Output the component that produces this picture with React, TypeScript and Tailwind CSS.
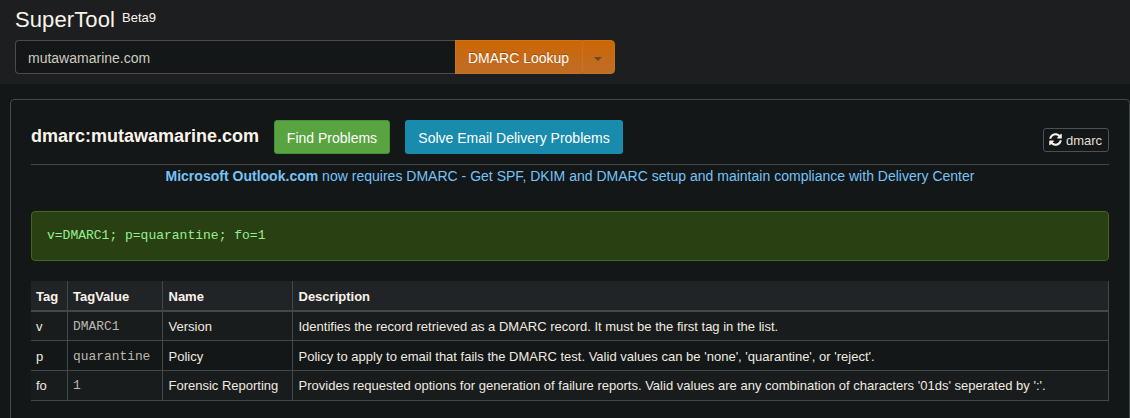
import { FaSyncAlt } from "react-icons/fa";

const rows = [
  { tag: "v", value: "DMARC1", name: "Version", description: "Identifies the record retrieved as a DMARC record. It must be the first tag in the list.", size: "h-[29px] leading-[29px]" },
  { tag: "p", value: "quarantine", name: "Policy", description: "Policy to apply to email that fails the DMARC test. Valid values can be 'none', 'quarantine', or 'reject'.", size: "h-[30px] leading-[31px]" },
  { tag: "fo", value: "1", name: "Forensic Reporting", description: "Provides requested options for generation of failure reports. Valid values are any combination of characters '01ds' seperated by ':'.", size: "h-[30px] leading-[29px]" },
];

const columns = "grid grid-cols-[37px_95px_130px_816px]";
const cell = "border-r border-[#43484b] px-[5px] whitespace-nowrap";
const wideCell = "border-r border-[#43484b] pl-[5.5px] whitespace-nowrap";

function SearchHeader() {
  return (
    <header className="h-[84px] bg-[#1d1e20] px-[15px] pt-[5px]">
      <h1 className="flex h-[35px] items-start text-[22px] leading-[29px] text-[#faf3ea]">
        <span className="w-[107px] tracking-[0.1px]">SuperTool</span>
        <sup className="top-0 text-[13px] leading-[25px]">Beta9</sup>
      </h1>
      <div className="flex h-[34px] w-[600px] text-[14px]">
        <div className="flex w-[440px] items-center rounded-l border border-r-0 border-[#484c4e] bg-[#131718] px-3 pt-[2px] text-[#cfcabf]">
          mutawamarine.com
        </div>
        <button className="flex w-[127px] items-center border border-r-0 border-[#c47422] bg-linear-to-b from-[#cc6600] to-[#bf6d24] pt-[3px] pl-3 text-white [text-shadow:0_-1px_0_rgba(0,0,0,0.25)]">
          DMARC Lookup
        </button>
        <button aria-label="Choose lookup" className="flex flex-1 items-center rounded-r border border-[#c47422] bg-linear-to-b from-[#cc6600] to-[#bf6d24] pt-[3px] pl-[11px]">
          <span className="border-x-4 border-t-4 border-x-transparent border-t-[#65482f]" />
        </button>
      </div>
    </header>
  );
}

function TagTable() {
  return (
    <div className="mt-5 text-[13px] text-[#f0eae0]">
      <div className={`${columns} h-[31px] border-b-2 border-[#43484b] bg-[#212426] leading-[31px] font-bold text-[#faf3ea]`}>
        <div className={cell}>Tag</div>
        <div className={cell}>TagValue</div>
        <div className={wideCell}>Name</div>
        <div className={wideCell}>Description</div>
      </div>
      {rows.map((row) => (
        <div key={row.tag} className={`${columns} ${row.size} border-b border-[#43484b] odd:bg-[#131718] even:bg-[#191c1d]`}>
          <div className={cell}>{row.tag}</div>
          <div className={`${cell} font-['Liberation_Mono',monospace] text-[12.9px] text-[#bdb8ae]`}>{row.value}</div>
          <div className={wideCell}>{row.name}</div>
          <div className={`${wideCell} tracking-[0.008px]`}>{row.description}</div>
        </div>
      ))}
    </div>
  );
}

export default function App() {
  return (
    <div className="h-[418px] overflow-hidden bg-[#131718] font-['Liberation_Sans',Arial,sans-serif]">
      <SearchHeader />
      <main className="mt-[15px] ml-[10px] h-[340px] w-[1120px] rounded border border-[#43484b] px-5 pt-5">
        <div className="flex h-[45px] border-b border-[#43484b]">
          <h2 className="w-[243px] text-[18px] leading-[33px] font-bold text-[#faf3ea]">dmarc:mutawamarine.com</h2>
          <button className="h-[34px] w-[116px] rounded-[3px] border border-[#3d943f] bg-[#59a440] pt-[3px] text-[14px] text-white">Find Problems</button>
          <button className="ml-[15px] h-[34px] w-[218px] rounded-[3px] bg-[#198bad] pt-[3px] text-[14px] text-white">Solve Email Delivery Problems</button>
          <button className="mt-2 ml-auto flex h-6 w-[66px] items-center rounded-[3px] border border-[#4b5052] pl-[5px] text-[13px] text-[#e5dfd5]">
            <FaSyncAlt className="mr-1 mb-[2px] size-[13px] text-[#faf3ea]" /><span className="pt-px">dmarc</span>
          </button>
        </div>
        <p className="h-[46px] text-center text-[14px] leading-[23px] tracking-[0.012px] text-[#77c3f6]">
          <a href="#"><b>Microsoft Outlook.com</b> now requires DMARC - Get SPF, DKIM and DMARC setup and maintain compliance with Delivery Center</a>
        </p>
        <pre className="h-[50px] rounded border border-[#40691c] bg-[#294013] px-[15px] font-['Liberation_Mono',monospace] text-[13px] leading-[47px] text-[#96ee91]">v=DMARC1; p=quarantine; fo=1</pre>
        <TagTable />
      </main>
    </div>
  );
}
